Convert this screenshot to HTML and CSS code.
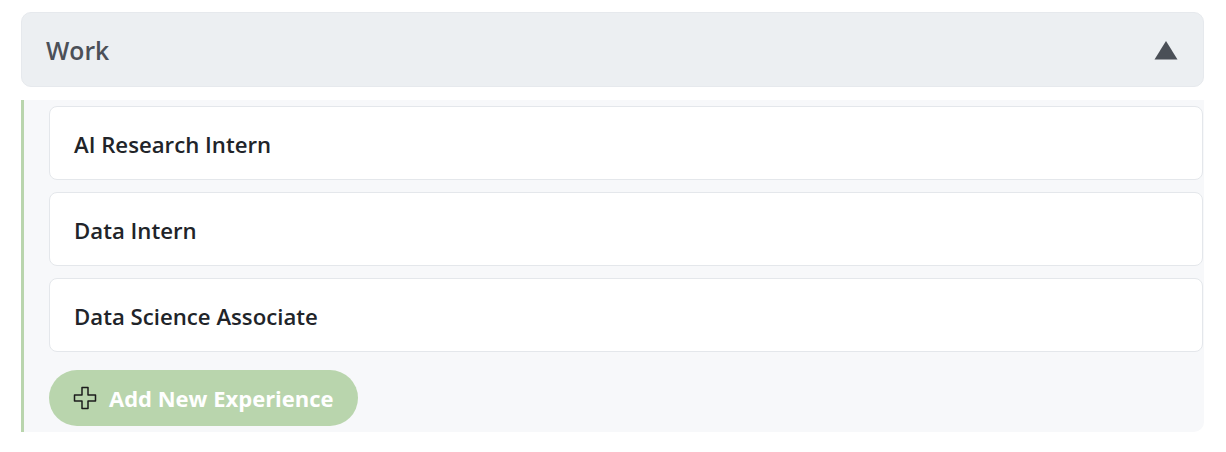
FILE: index.html
```html
<!DOCTYPE html>
<html>
<head>
<meta charset="utf-8">
<link rel="stylesheet" href="styles.css">
</head>
<body>
<div class="page">
  <div class="section-head">
    <span class="section-title">Work</span>
    <svg class="caret" width="24" height="20" viewBox="0 0 24 20"><polygon points="12,1 23.5,19.5 0.5,19.5" fill="#4a4f57"/></svg>
  </div>
  <div class="section-body">
    <div class="card"><span class="card-title">AI Research Intern</span></div>
    <div class="card"><span class="card-title">Data Intern</span></div>
    <div class="card"><span class="card-title">Data Science Associate</span></div>
    <button class="add-btn">
      <svg class="plus" width="24" height="24" viewBox="0 0 24 24"><path d="M9 1.5h6v7.5h7.5v6H15v7.5H9V15H1.5V9H9z" fill="none" stroke="#1c1c1c" stroke-width="1.5" stroke-linejoin="round"/></svg>
      <span>Add New Experience</span>
    </button>
  </div>
</div>
</body>
</html>
```
FILE: styles.css
```css
html, body { margin: 0; padding: 0; background: #ffffff; }
body { font-family: "Open Sans", "Noto Sans", sans-serif; }
.page { padding: 12px 22px 0 21px; }
.section-head {
  height: 75px;
  box-sizing: border-box;
  background: #eceff2;
  border: 1px solid #e6e9ed;
  border-radius: 10px;
  display: flex;
  align-items: center;
  justify-content: space-between;
  padding: 0 25px 0 24px;
}
.section-title { font-size: 24.7px; font-weight: 600; color: #4b5058; padding-top: 2px; }
.caret { display: block; }
.section-body {
  margin-top: 13px;
  background: #f7f8fa;
  border-left: 3px solid #b9d5ad;
  border-bottom-right-radius: 10px;
  padding: 6px 1px 6px 25px;
  display: flex;
  flex-direction: column;
  gap: 12px;
}
.card {
  height: 74px;
  box-sizing: border-box;
  background: #ffffff;
  border: 1px solid #e4e7eb;
  border-radius: 8px;
  display: flex;
  align-items: center;
  padding: 2px 0 0 24px;
}
.card-title { font-size: 22.2px; font-weight: 600; color: #212429; }
.add-btn {
  margin-top: 6px;
  align-self: flex-start;
  height: 56px;
  border: none;
  border-radius: 28px;
  background: #b9d5ad;
  color: #ffffff;
  font-family: inherit;
  font-size: 22px;
  font-weight: 700;
  padding: 0 24px;
  display: flex;
  align-items: center;
  gap: 12px;
}
.plus { display: block; }
```
